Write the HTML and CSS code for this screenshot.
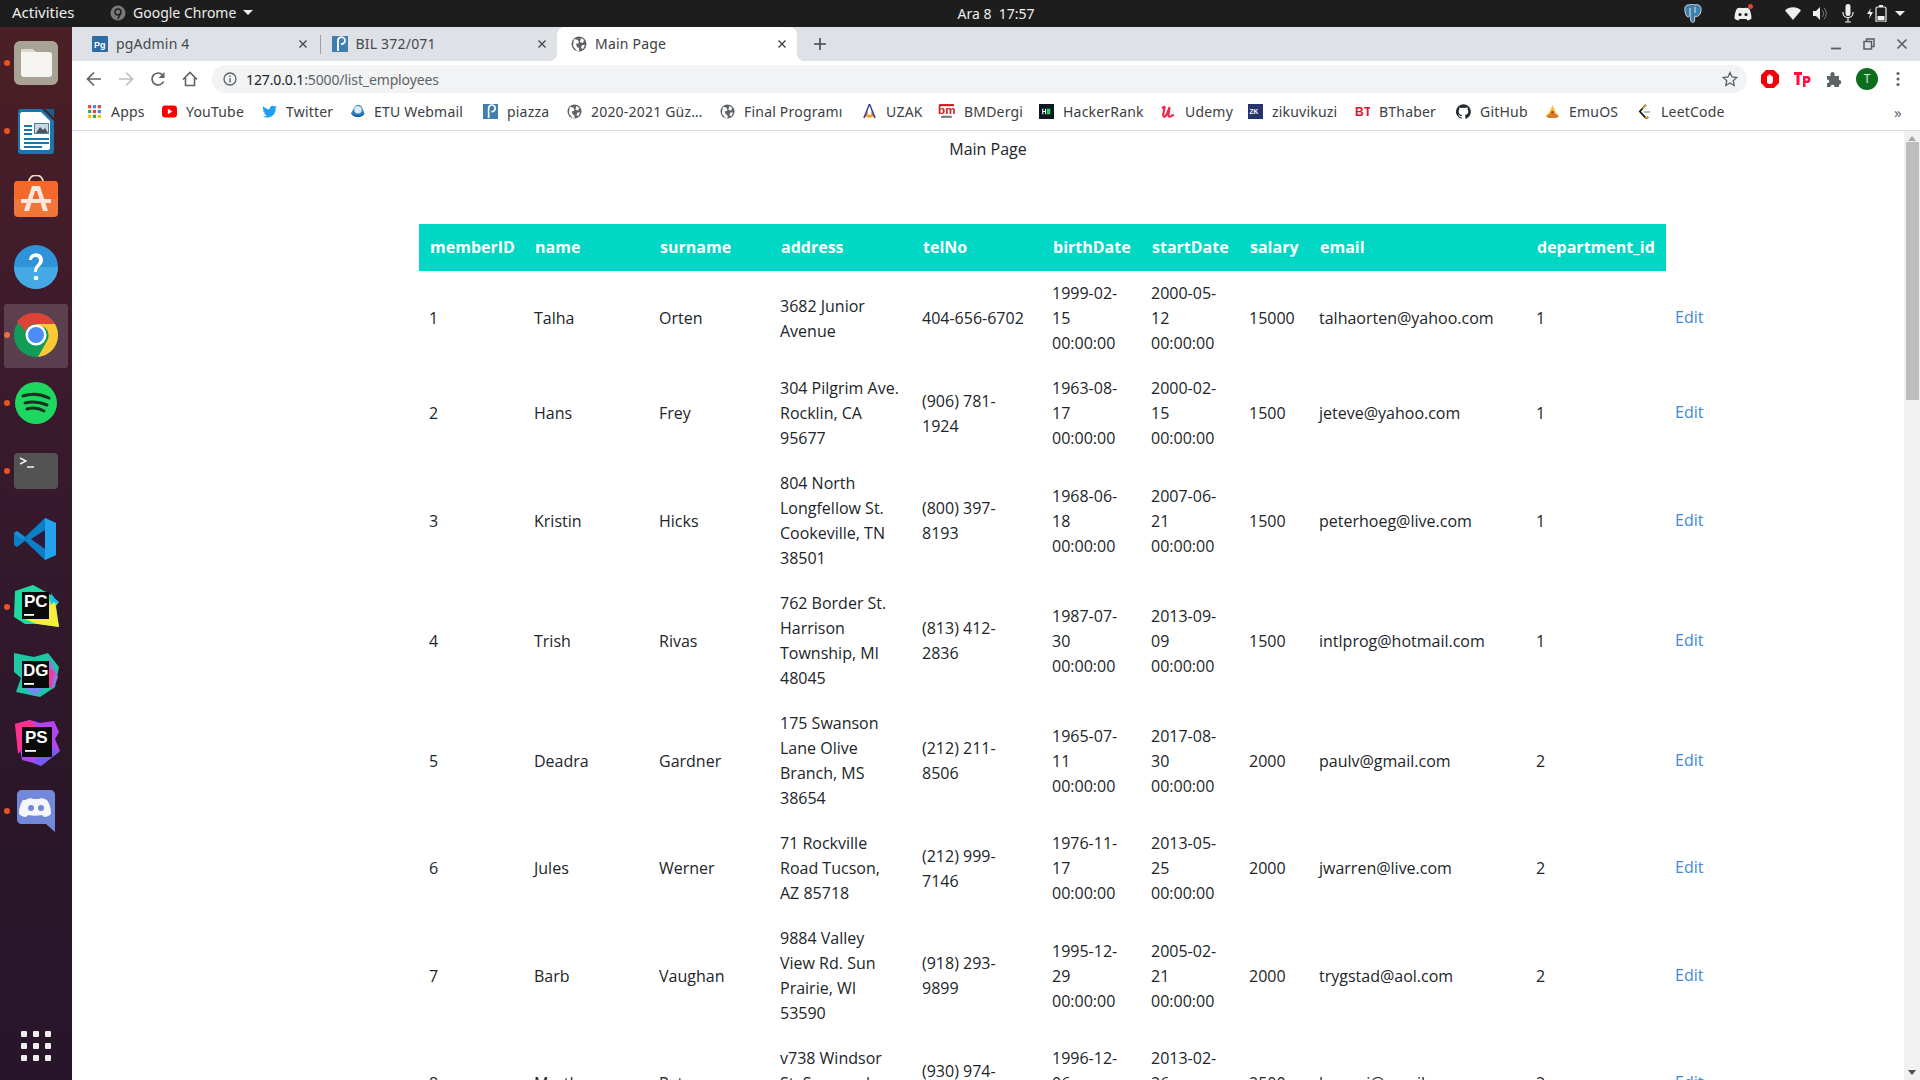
FILE: index.html
```html
<!DOCTYPE html>
<html>
<head>
<meta http-equiv="Content-Type" content="text/html; charset=utf-8"/>
<title>Main Page</title>
<link rel="stylesheet" href="styles.css">
</head>
<body>

<div class="topbar">
  <span class="activities">Activities</span>
  <span class="appmenu">
    <svg width="16" height="16" viewBox="0 0 16 16"><circle cx="8" cy="8" r="7.5" fill="#77797a"/><circle cx="8" cy="7" r="3" fill="none" stroke="#1d1d1d" stroke-width="1.4"/><path d="M10.8 7.5 8 14" stroke="#1d1d1d" stroke-width="1.4"/></svg>
    Google Chrome
    <i class="caret"></i>
  </span>
  <span class="clock">Ara 8&nbsp;&nbsp;17:57</span>
  <span class="tray">
    <svg class="t-pg" width="18" height="20" viewBox="0 0 18 20"><path d="M4 1C1 1 .5 4 1 7c.4 3 1.500 6 3 6 1 0 1.500-1 2-2 0 2 .5 4 1 6 .5 2 3 2 3.500 0 .3-1.500 0-3 .5-5 2 1 4 0 5-2 1.500-3 1.500-6 0-8-1.500-1.500-4-1.500-5-1-1.500-1-5-1-6 0z" fill="#3f7fae" stroke="#c9d5df" stroke-width="1"/><path d="M6 4v7M11 3v6" stroke="#dfe8ef" stroke-width="1"/></svg>
    <span class="t-discord">
      <svg width="18" height="14" viewBox="0 0 18 14"><path d="M3 1.500C5 .5 6.500.5 7 1h4c.5-.5 2-.5 4 .5 1.500 2.500 2.500 6 2.500 10-1 1-2.500 1.800-4 2l-1-1.500H5.500l-1 1.500c-1.500-.2-3-1-4-2 0-4 1-7.500 2.500-10z" fill="#eee"/><circle cx="6" cy="7.500" r="1.600" fill="#1d1d1d"/><circle cx="12" cy="7.500" r="1.600" fill="#1d1d1d"/></svg>
      <i class="t-badge"></i>
    </span>
    <svg class="t-wifi" width="16" height="13" viewBox="0 0 16 13"><path d="M0 3.500C4-.8 12-.8 16 3.500L8 13z" fill="#eee"/></svg>
    <svg class="t-vol" width="15" height="13" viewBox="0 0 15 13"><path d="M0 4h3l4-4v13L3 9H0z" fill="#eee"/><path d="M9 3c2 2 2 5 0 7M11 1c3 3 3 8 0 11" fill="none" stroke="#888" stroke-width="1"/></svg>
    <svg class="t-mic" width="12" height="19" viewBox="0 0 12 19"><rect x="3.500" y="0" width="5" height="12" rx="2.500" fill="#eee"/><path d="M1 8v1c0 6 10 6 10 0V8M6 14v4M3 18h6" fill="none" stroke="#eee" stroke-width="1.200"/></svg>
    <svg class="t-bat" width="20" height="17" viewBox="0 0 20 17"><path d="M4 3 0 9h3l-1 5 4-7H3z" fill="#eee"/><rect x="9" y="2" width="10" height="15" rx="1.500" fill="none" stroke="#eee" stroke-width="1.200"/><rect x="12" y="0" width="4" height="2" fill="#eee"/><rect x="10.500" y="11" width="7" height="4.500" fill="#eee"/></svg>
    <i class="caret big"></i>
  </span>
</div>

<div class="desktop">
  <div class="dock">
    <div class="dock-item running">
      <svg width="44" height="44" viewBox="0 0 44 44"><rect width="44" height="44" rx="6" fill="#a8a394"/><path d="M7 11c0-2 1-3 3-3h8l4 3h13c2 0 3 1 3 3v19c0 2-1 3-3 3H10c-2 0-3-1-3-3z" fill="#f6f5f2"/><path d="M7 11c0-2 1-3 3-3h8l4 3z" fill="#dcd9d2"/></svg>
    </div>
    <div class="dock-item running">
      <svg width="36" height="46" viewBox="0 0 36 46"><path d="M3 1h21l12 12v30c0 2-1 3-3 3H3c-2 0-3-1-3-3V4c0-2 1-3 3-3z" fill="#1c76ad"/><path d="M4 4h19l9 9v27c0 1-1 2-2 2H4c-1 0-2-1-2-2V6c0-1 1-2 2-2z" fill="#fff"/><path d="M27 1h9v9z" fill="#14608f"/><path d="M6 17h8v2H6zm0 4h8v2H6zm0 4h8v2H6zM6 30h25v2H6zm0 4h25v2H6zm0 4h18v2H6z" fill="#1c76ad"/><rect x="16" y="15" width="15" height="11" fill="#3f83b0"/><rect x="17" y="16" width="13" height="9" fill="#c9d6de"/><path d="M18 25l4-6 3 3 2-2 3 5z" fill="#4d5358"/></svg>
    </div>
    <div class="dock-item">
      <svg class="bag" width="44" height="42" viewBox="0 0 44 42"><path d="M15 7c0-9 14-9 14 0" fill="none" stroke="#f3d9b5" stroke-width="1.800"/><rect y="6" width="44" height="36" rx="4" fill="#f27539"/><rect y="6" width="44" height="18" rx="4" fill="#f4682c"/><path d="M18 11h8l8 25h-5l-6-20h-2l-6 20h-5z" fill="#fbe7dc"/><path d="M7 24h30v4H7z" fill="#fbe7dc"/></svg>
    </div>
    <div class="dock-item">
      <svg width="44" height="44" viewBox="0 0 44 44"><circle cx="22" cy="22" r="22" fill="#2e93d9"/><path d="M0 22a22 22 0 0 0 44 0z" fill="#45a9e5"/><path d="M15 15c0-9 14-9 14 0 0 6-6 6-6 12h-3c0-8 5-7 5-12 0-4-7-4-7 0z" fill="#fff"/><circle cx="22" cy="33" r="2.300" fill="#fff"/></svg>
    </div>
    <div class="dock-item running active">
      <svg width="44" height="44" viewBox="0 0 44 44"><circle cx="22" cy="22" r="22" fill="#109d58"/><path d="M22 0a22 22 0 0 1 19 11H22a11 11 0 0 0-10.500 7.500L3 8.500A22 22 0 0 1 22 0z" fill="#db4437"/><path d="M41 11a22 22 0 0 1-17 33l8.500-15A11 11 0 0 0 31 14.500L22 11z" fill="#fcc934"/><circle cx="22" cy="22" r="10.500" fill="#fff"/><circle cx="22" cy="22" r="8" fill="#4d8df5"/></svg>
    </div>
    <div class="dock-item running">
      <svg width="42" height="42" viewBox="0 0 42 42"><circle cx="21" cy="21" r="21" fill="#1ed760"/><path d="M8 14c9-3 18-2 26 2M10 21c8-2 15-1 22 2M12 27c6-2 12-1 17 2" fill="none" stroke="#16331f" stroke-width="3" stroke-linecap="round"/></svg>
    </div>
    <div class="dock-item running">
      <svg width="44" height="36" viewBox="0 0 44 36"><rect width="44" height="36" rx="4" fill="#535353"/><path d="M6 5l6 3-6 3M13 14h7" fill="none" stroke="#f2f2f2" stroke-width="1.400"/></svg>
    </div>
    <div class="dock-item">
      <svg width="44" height="42" viewBox="0 0 44 42"><path d="M31 0l11 5v32l-11 5-20-19L3 29l-3-2V15l3-2 8 6z" fill="#0a7fc7"/><path d="M31 0l11 5v32l-11 5z" fill="#23a2ee"/><path d="M31 12 17 21l14 10z" fill="#32183a"/><path d="M3 13l8 6-3 3-8-7z" fill="#1a8cd8"/></svg>
    </div>
    <div class="dock-item running">
      <svg width="46" height="46" viewBox="0 0 46 46"><path d="M2 7 20 1l15 8 11 9-3 4 3 21-20-3-14 0-11-7z" fill="#20d9a0"/><path d="M32 0l3 16 10 3-8 6z" fill="#b0d65a"/><path d="M38 9l7 10-7 3z" fill="#14c0ee"/><path d="M12 35l30-17 4 25-22-3z" fill="#f5ee3c"/><rect x="9" y="8" width="27" height="27" fill="#0a0a0a"/><text class="ide-mark" x="11" y="23">PC</text><rect x="11" y="30" width="10" height="1.800" fill="#fff"/></svg>
    </div>
    <div class="dock-item">
      <svg width="46" height="46" viewBox="0 0 46 46"><path d="M1 1l20 4 14-4 11 14-4 20-15 10L3 40l5-14L1 20z" fill="#1fc7a4"/><path d="M36 6l9 19-5 12-9-15z" fill="#9475e0"/><path d="M30 12l12 8-4 16-8-2z" fill="#ee3aa3"/><path d="M10 35h22l-10 9z" fill="#6f8cf0"/><rect x="9" y="9" width="27" height="27" fill="#0a0a0a"/><text class="ide-mark" x="10" y="24">DG</text><rect x="11" y="31" width="10" height="1.800" fill="#fff"/></svg>
    </div>
    <div class="dock-item">
      <svg width="48" height="46" viewBox="0 0 48 46"><path d="M3 4 18 0l10 3 14-2 5 11-4 7 5 12-18 14-20-5z" fill="#b345f1"/><path d="M3 4 18 0 26 8 6 34z" fill="#ff318c"/><path d="M28 34l14-6 5 4-18 14-8-3z" fill="#765af8"/><rect x="10" y="7" width="30" height="30" fill="#0a0a0a"/><text class="ide-mark" x="13" y="23">PS</text><rect x="13" y="30" width="11" height="1.800" fill="#fff"/></svg>
    </div>
    <div class="dock-item running">
      <svg width="38" height="42" viewBox="0 0 38 42"><path d="M5 0h28c3 0 5 2 5 5v37l-9-8H5c-3 0-5-2-5-5V5c0-3 2-5 5-5z" fill="#7289da"/><path d="M8 10c4-2 7-2 8-1h6c1-1 4-1 8 1 3 4 4 9 4 14-2 2-4 3-7 3l-2-2c-5 1-9 1-14 0l-2 2c-3 0-5-1-7-3 0-5 1-10 4-14z" fill="#f4f6fb"/><circle cx="14" cy="18" r="3" fill="#7289da"/><circle cx="24" cy="18" r="3" fill="#7289da"/></svg>
    </div>
    <div class="dock-grid">
      <i></i><i></i><i></i><i></i><i></i><i></i><i></i><i></i><i></i>
    </div>
  </div>

  <div class="browser">
    <div class="tabstrip">
      <div class="tab">
        <svg class="ico" viewBox="0 0 16 16"><rect width="16" height="16" rx="1" fill="#2b6ca3"/><text class="fav-mark" x="2" y="11.500">Pg</text></svg>
        <span class="tab-title">pgAdmin 4</span>
        <svg class="tab-x" viewBox="0 0 10 10"><path d="M1.500 1.500l7 7M8.500 1.500l-7 7" stroke="#45494e" stroke-width="1.400"/></svg>
      </div>
      <div class="tab sep">
        <svg class="ico" viewBox="0 0 16 16"><rect width="16" height="16" fill="#3e7eb0"/><path d="M6 15V4.500a3.500 3.500 0 1 1 3 3.500" fill="none" stroke="#fff" stroke-width="1.800"/></svg>
        <span class="tab-title">BIL 372/071</span>
        <svg class="tab-x" viewBox="0 0 10 10"><path d="M1.500 1.500l7 7M8.500 1.500l-7 7" stroke="#45494e" stroke-width="1.400"/></svg>
      </div>
      <div class="tab current">
        <svg class="ico" viewBox="0 0 16 16"><circle cx="8" cy="8" r="7.500" fill="#5f6368"/><path d="M3 3l4 1 1 3-3 1 1 3 2 1 0 3-2 0-4-5zM10 2l3 2-1 3-3-1zM11 9l3 0-2 4-2-1z" fill="#fff"/></svg>
        <span class="tab-title">Main Page</span>
        <svg class="tab-x" viewBox="0 0 10 10"><path d="M1.500 1.500l7 7M8.500 1.500l-7 7" stroke="#3c4043" stroke-width="1.400"/></svg>
      </div>
      <svg class="newtab" width="14" height="14" viewBox="0 0 14 14"><path d="M7 1v12M1 7h12" stroke="#45494e" stroke-width="1.600"/></svg>
      <div class="winctl">
        <svg width="12" height="12" viewBox="0 0 12 12"><path d="M1 10.500h10" stroke="#5a5d60" stroke-width="1.800"/></svg>
        <svg width="12" height="12" viewBox="0 0 12 12"><path d="M3.500 3V1h7.500v7.500H8.500" fill="none" stroke="#5a5d60" stroke-width="1.500"/><rect x="1" y="3.500" width="7.500" height="7.500" fill="none" stroke="#5a5d60" stroke-width="1.500"/></svg>
        <svg width="12" height="12" viewBox="0 0 12 12"><path d="M1.500 1.500l9 9M10.500 1.500l-9 9" stroke="#5a5d60" stroke-width="1.600"/></svg>
      </div>
    </div>

    <div class="toolbar">
      <div class="nav">
        <svg width="16" height="16" viewBox="0 0 16 16"><path d="M15 8H2M8 1.500 1.500 8 8 14.500" fill="none" stroke="#5f6368" stroke-width="1.700"/></svg>
        <svg width="16" height="16" viewBox="0 0 16 16"><path d="M1 8h13M8 1.500 14.500 8 8 14.500" fill="none" stroke="#bcbfc3" stroke-width="1.700"/></svg>
        <svg width="16" height="16" viewBox="0 0 16 16"><path d="M13.500 10.500A6 6 0 1 1 12.500 4" fill="none" stroke="#5f6368" stroke-width="1.700"/><path d="M14.500 1v6h-6z" fill="#5f6368"/></svg>
        <svg width="16" height="16" viewBox="0 0 16 16"><path d="M1 8.500 8 1.500l7 7M3.500 7v7.500h9V7" fill="none" stroke="#5f6368" stroke-width="1.600"/></svg>
      </div>
      <div class="omnibox">
        <svg width="14" height="14" viewBox="0 0 14 14"><circle cx="7" cy="7" r="6" fill="none" stroke="#5f6368" stroke-width="1.300"/><path d="M7 6v4.500M7 3.500v1.500" stroke="#5f6368" stroke-width="1.400"/></svg>
        <span class="url"><b>127.0.0.1</b>:5000/list_employees</span>
        <svg class="star" width="16" height="16" viewBox="0 0 16 16"><path d="M8 1.500l2 4.500 4.800.5-3.600 3.200 1 4.800L8 12l-4.200 2.500 1-4.800L1.200 6.500 6 6z" fill="none" stroke="#5f6368" stroke-width="1.300"/></svg>
      </div>
      <div class="extensions">
        <svg width="18" height="18" viewBox="0 0 18 18"><path d="M5 0h8l5 5v8l-5 5H5l-5-5V5z" fill="#f40009"/><path d="M6 13V6.500c0-1 1.500-1 1.500 0V5c0-1 1.500-1 1.500 0v.5c0-1 1.500-1 1.500 0V7c0-1 1.500-1 1.500 0v4c0 2-1.500 3-3 3s-2-.5-3-1z" fill="#fff"/></svg>
        <svg width="17" height="17" viewBox="0 0 17 17"><path d="M0 1h8v3H5.500v10h-3V4H0zM9 5h4.500c4 0 4 7 0 7H11.500v4H9zm2.500 2.500v2h1.500c1 0 1-2 0-2z" fill="#f7133d"/></svg>
        <svg width="16" height="16" viewBox="0 0 16 16"><path d="M1 5h3.500C4 2 5 1 6.500 1S9 2 8.500 5H13v4c3-.5 3 5 0 4.500V16H8.500c.5-3-4.500-3-4 0H1v-4c3 .5 3-4 0-3.500z" fill="#5f6368"/></svg>
        <span class="avatar">T</span>
        <svg class="menu-dots" width="4" height="16" viewBox="0 0 4 16"><circle cx="2" cy="2.500" r="1.600" fill="#5f6368"/><circle cx="2" cy="8" r="1.600" fill="#5f6368"/><circle cx="2" cy="13.500" r="1.600" fill="#5f6368"/></svg>
      </div>
    </div>

    <div class="bookmarks">
      <span class="bm">
        <svg class="bm-ico" viewBox="0 0 14 14"><path d="M1 1h3v3H1z" fill="#ea4335"/><path d="M5.500 1h3v3h-3z" fill="#4285f4"/><path d="M10 1h3v3h-3z" fill="#ea4335"/><path d="M1 5.500h3v3H1z" fill="#34a853"/><path d="M5.500 5.500h3v3h-3z" fill="#ea4335"/><path d="M10 5.500h3v3h-3z" fill="#4285f4"/><path d="M1 10h3v3H1z" fill="#fbbc05"/><path d="M5.500 10h3v3h-3z" fill="#34a853"/><path d="M10 10h3v3h-3z" fill="#fbbc05"/></svg>
        Apps</span>
      <span class="bm">
        <svg class="bm-ico" viewBox="0 0 14 14"><rect y="1.500" width="14" height="11" rx="3" fill="#f00"/><path d="M5.500 4.500v5L9.700 7z" fill="#fff"/></svg>
        YouTube</span>
      <span class="bm">
        <svg class="bm-ico" viewBox="0 0 14 14"><path d="M14 2.800l-1.500.5c.6-.4 1-1 1.200-1.600l-1.600.8C10.800 1 8 1.600 7.300 3.500c-.2.500-.2 1-.1 1.500C4.800 4.900 2.700 3.700 1.200 2c-.8 1.300-.4 3 .9 3.900L.9 5.500c0 1.400 1 2.500 2.300 2.800l-1.200.1c.4 1.100 1.400 1.900 2.600 2-1.200.9-2.800 1.300-4.300 1.100 5.500 3.200 12.700-.4 12.500-7.700z" fill="#1da1f2"/></svg>
        Twitter</span>
      <span class="bm">
        <svg class="bm-ico" viewBox="0 0 16 16"><path d="M1 10l4-7c2-2.500 6-2.500 7.500 0l3 7c-3 5-11 5-14.500 0z" fill="#2c7ec2"/><ellipse cx="8.500" cy="6" rx="4" ry="4" fill="#dfeaf2"/><path d="M1 10c3 2 9 3 14.500 0-3 5-11 5-14.500 0z" fill="#1a5b93"/></svg>
        ETU Webmail</span>
      <span class="bm">
        <svg class="bm-ico" viewBox="0 0 16 16"><rect width="16" height="16" fill="#3e7eb0"/><path d="M6 15V4.500a3.500 3.500 0 1 1 3 3.500" fill="none" stroke="#fff" stroke-width="1.800"/></svg>
        piazza</span>
      <span class="bm">
        <svg class="bm-ico" viewBox="0 0 16 16"><circle cx="8" cy="8" r="7.500" fill="#5f6368"/><path d="M3 3l4 1 1 3-3 1 1 3 2 1 0 3-2 0-4-5zM10 2l3 2-1 3-3-1zM11 9l3 0-2 4-2-1z" fill="#fff"/></svg>
        2020-2021 Güz…</span>
      <span class="bm">
        <svg class="bm-ico" viewBox="0 0 16 16"><circle cx="8" cy="8" r="7.500" fill="#5f6368"/><path d="M3 3l4 1 1 3-3 1 1 3 2 1 0 3-2 0-4-5zM10 2l3 2-1 3-3-1zM11 9l3 0-2 4-2-1z" fill="#fff"/></svg>
        Final Programı</span>
      <span class="bm">
        <svg class="bm-ico" viewBox="0 0 14 16"><path d="M5 7 1 15l4-3z" fill="#ee5a24"/><path d="M9 7l4 8-4-3z" fill="#ee5a24"/><path d="M3 13c2-2 6-2 8 0l-4 2z" fill="#f7a11a"/><path d="M7 0 1 15M7 0l6 15" fill="none" stroke="#2a3f9a" stroke-width="1.500"/></svg>
        UZAK</span>
      <span class="bm">
        <svg class="bm-ico wide" viewBox="0 0 16 16"><text class="fav-bm" x="0" y="10">bm</text><path d="M1 1h14v2H1z" fill="#d01c24"/><path d="M3 12h10v2H3z" fill="#777"/></svg>
        BMDergi</span>
      <span class="bm">
        <svg class="bm-ico" viewBox="0 0 16 16"><rect width="16" height="16" fill="#0b1a22"/><path d="M4 5v6M7 5v6M4 8h3" stroke="#fff" stroke-width="1.200"/><rect x="8.500" y="5" width="3.500" height="6" fill="#2bd66a"/></svg>
        HackerRank</span>
      <span class="bm">
        <svg class="bm-ico" viewBox="0 0 14 14"><path d="M1 4c2-2 3-2 2 1L2 10c0 3 3 2 4-2l2-5-1 7c0 3 2 2 5 0" fill="none" stroke="#f2274e" stroke-width="2"/></svg>
        Udemy</span>
      <span class="bm">
        <svg class="bm-ico" viewBox="0 0 16 16"><rect width="16" height="16" fill="#27356e"/><text class="fav-mark small" x="1.500" y="11">ZK</text></svg>
        zikuvikuzi</span>
      <span class="bm">
        <svg class="bm-ico" viewBox="0 0 16 16"><text class="fav-bt" x="0" y="13">BT</text></svg>
        BThaber</span>
      <span class="bm">
        <svg class="bm-ico" viewBox="0 0 16 16"><path d="M8 .2a8 8 0 0 0-2.500 15.600c.4.100.5-.2.500-.4v-1.400c-2.200.5-2.700-1-2.700-1-.4-.9-.9-1.200-.9-1.200-.7-.5.100-.5.100-.5.800.1 1.200.8 1.200.8.700 1.200 1.900.9 2.300.7.100-.5.300-.9.500-1.100-1.800-.2-3.600-.9-3.600-4 0-.9.300-1.600.8-2.100-.1-.2-.4-1 .1-2.100 0 0 .7-.2 2.200.8a7.500 7.500 0 0 1 4 0c1.500-1 2.200-.8 2.200-.8.400 1.100.200 1.900.100 2.100.5.600.8 1.300.8 2.100 0 3.100-1.900 3.700-3.700 3.900.3.300.6.800.6 1.500v2.200c0 .2.100.5.600.4A8 8 0 0 0 8 .2z" fill="#24292e"/></svg>
        GitHub</span>
      <span class="bm">
        <svg class="bm-ico" viewBox="0 0 16 16"><path d="M8 1l3 7 4 5-4 2H5l-4-2 4-5z" fill="#f2c12e"/><path d="M1 13l5-3 4 0 5 3-3 2H4z" fill="#d97a2b"/><circle cx="8" cy="9" r="1.500" fill="#b33"/></svg>
        EmuOS</span>
      <span class="bm">
        <svg class="bm-ico" viewBox="0 0 16 16"><path d="M9.500 1 3 8l5.500 6c1.200 1 2.500 1 3.500 0" fill="none" stroke="#111" stroke-width="1.800"/><path d="M9.500 1 6 5" stroke="#e8a33a" stroke-width="1.800"/><path d="M7 8.500h7" stroke="#b3b3b3" stroke-width="1.800"/><path d="M9 14c1.200.6 2.200.4 3-.3" stroke="#f0a400" stroke-width="1.800" fill="none"/></svg>
        LeetCode</span>
      <span class="bm-more">»</span>
    </div>

    <div class="viewport">
      <div class="page">
        <p class="page-title">Main Page</p>
        <div class="table-wrap">
          <table class="employees">
            <colgroup>
              <col class="c-id"><col class="c-name"><col class="c-surname"><col class="c-address"><col class="c-tel">
              <col class="c-birth"><col class="c-start"><col class="c-salary"><col class="c-email"><col class="c-dept"><col class="c-edit">
            </colgroup>
            <thead>
              <tr>
                <th>memberID</th><th>name</th><th>surname</th><th>address</th><th>telNo</th>
                <th>birthDate</th><th>startDate</th><th>salary</th><th>email</th><th>department_id</th><th class="blank"></th>
              </tr>
            </thead>
            <tbody>
              <tr>
                <td>1</td><td>Talha</td><td>Orten</td><td>3682 Junior Avenue</td><td>404-656-6702</td>
                <td>1999-02-15 00:00:00</td><td>2000-05-12 00:00:00</td><td>15000</td><td>talhaorten@yahoo.com</td><td>1</td><td class="edit"><a href="#">Edit</a></td>
              </tr>
              <tr>
                <td>2</td><td>Hans</td><td>Frey</td><td>304 Pilgrim Ave. Rocklin, CA 95677</td><td>(906) 781-1924</td>
                <td>1963-08-17 00:00:00</td><td>2000-02-15 00:00:00</td><td>1500</td><td>jeteve@yahoo.com</td><td>1</td><td class="edit"><a href="#">Edit</a></td>
              </tr>
              <tr>
                <td>3</td><td>Kristin</td><td>Hicks</td><td>804 North Longfellow St. Cookeville, TN 38501</td><td>(800) 397-8193</td>
                <td>1968-06-18 00:00:00</td><td>2007-06-21 00:00:00</td><td>1500</td><td>peterhoeg@live.com</td><td>1</td><td class="edit"><a href="#">Edit</a></td>
              </tr>
              <tr>
                <td>4</td><td>Trish</td><td>Rivas</td><td>762 Border St. Harrison Township, MI 48045</td><td>(813) 412-2836</td>
                <td>1987-07-30 00:00:00</td><td>2013-09-09 00:00:00</td><td>1500</td><td>intlprog@hotmail.com</td><td>1</td><td class="edit"><a href="#">Edit</a></td>
              </tr>
              <tr>
                <td>5</td><td>Deadra</td><td>Gardner</td><td>175 Swanson Lane Olive Branch, MS 38654</td><td>(212) 211-8506</td>
                <td>1965-07-11 00:00:00</td><td>2017-08-30 00:00:00</td><td>2000</td><td>paulv@gmail.com</td><td>2</td><td class="edit"><a href="#">Edit</a></td>
              </tr>
              <tr>
                <td>6</td><td>Jules</td><td>Werner</td><td>71 Rockville Road Tucson, AZ 85718</td><td>(212) 999-7146</td>
                <td>1976-11-17 00:00:00</td><td>2013-05-25 00:00:00</td><td>2000</td><td>jwarren@live.com</td><td>2</td><td class="edit"><a href="#">Edit</a></td>
              </tr>
              <tr>
                <td>7</td><td>Barb</td><td>Vaughan</td><td>9884 Valley View Rd. Sun Prairie, WI 53590</td><td>(918) 293-9899</td>
                <td>1995-12-29 00:00:00</td><td>2005-02-21 00:00:00</td><td>2000</td><td>trygstad@aol.com</td><td>2</td><td class="edit"><a href="#">Edit</a></td>
              </tr>
              <tr>
                <td>8</td><td>Martha</td><td>Peters</td><td>v738 Windsor St. Savannah, GA 31401</td><td>(930) 974-3312</td>
                <td>1996-12-06 00:00:00</td><td>2013-02-26 00:00:00</td><td>2500</td><td>lamoni@gmail.com</td><td>2</td><td class="edit"><a href="#">Edit</a></td>
              </tr>
            </tbody>
          </table>
        </div>
      </div>
      <div class="scrollbar">
        <i class="arrow up"></i>
        <div class="thumb"></div>
        <i class="arrow down"></i>
      </div>
    </div>
  </div>
</div>

</body>
</html>
```

FILE: styles.css
```css
html, body {
  margin: 0;
  height: 100%;
  overflow: hidden;
}

body {
  display: flex;
  flex-direction: column;
  font-family: "Noto Sans", "Open Sans", sans-serif;
  background-color: white;
}

/* gnome top bar */
.topbar {
  height: 27px;
  flex: none;
  box-sizing: border-box;
  padding-left: 72px;
  display: grid;
  grid-template-columns: 1fr auto 1fr;
  align-items: center;
  position: relative;
  background: #1d1d1d;
  color: #eeeeec;
  font-size: 14px;
}

.activities {
  position: absolute;
  left: 12px;
  top: 2px;
  font-size: 15px;
}

.appmenu {
  position: absolute;
  left: 110px;
  top: 3px;
  display: flex;
  align-items: center;
  gap: 7px;
}

.caret {
  width: 0;
  height: 0;
  border-left: 5px solid transparent;
  border-right: 5px solid transparent;
  border-top: 5px solid #eee;
}

.clock {
  grid-column: 2;
}

.tray {
  grid-column: 3;
  justify-self: end;
  display: flex;
  align-items: center;
  height: 27px;
  padding-right: 15px;
}

.t-discord {
  position: relative;
  display: flex;
  margin-left: 32px;
}

.t-badge {
  position: absolute;
  right: -1px;
  top: -3px;
  width: 5px;
  height: 5px;
  border-radius: 50%;
  background: #e8413a;
}

.t-wifi { margin-left: 33px; }
.t-vol { margin-left: 12px; }
.t-mic { margin-left: 14px; }
.t-bat { margin-left: 13px; }
.caret.big { margin-left: 8px; }

/* dock */
.desktop {
  flex: 1;
  min-height: 0;
  display: flex;
}

.dock {
  width: 72px;
  flex: none;
  display: flex;
  flex-direction: column;
  background: linear-gradient(180deg, #4b1f25 0%, #3a1a2d 35%, #2c1729 70%, #27152a 100%);
}

.dock-item {
  height: 68px;
  flex: none;
  display: flex;
  align-items: center;
  justify-content: center;
  position: relative;
}

.dock-item:first-child {
  margin-top: 2px;
}

.dock-item.running::before {
  content: "";
  position: absolute;
  left: 4px;
  top: 31px;
  width: 6px;
  height: 6px;
  border-radius: 50%;
  background: #e95420;
}

.dock-item.active::after {
  content: "";
  position: absolute;
  left: 4px;
  right: 4px;
  top: 3px;
  bottom: 1px;
  border-radius: 3px;
  background: rgba(255, 255, 255, 0.16);
}

.dock-item svg {
  position: relative;
  z-index: 1;
}

.dock-item .bag {
  margin-bottom: 6px;
}

.ide-mark {
  font-family: "Liberation Sans", sans-serif;
  font-weight: bold;
  font-size: 17px;
  fill: #fff;
}

.dock-grid {
  margin-top: auto;
  margin-bottom: 19px;
  align-self: center;
  display: grid;
  grid-template-columns: repeat(3, 6px);
  gap: 6px;
}

.dock-grid i {
  width: 6px;
  height: 6px;
  border-radius: 1px;
  background: #eeeeec;
}

/* chrome */
.browser {
  flex: 1;
  min-width: 0;
  display: flex;
  flex-direction: column;
}

.tabstrip {
  height: 34px;
  flex: none;
  display: flex;
  align-items: center;
  background: #dee1e6;
  padding-left: 6px;
  color: #45494e;
  font-size: 14px;
}

.tab {
  width: 239.5px;
  height: 34px;
  flex: none;
  box-sizing: border-box;
  padding: 0 10px 0 14px;
  display: flex;
  align-items: center;
  gap: 8px;
  position: relative;
}

.tab.sep::before {
  content: "";
  position: absolute;
  left: 2px;
  top: 8px;
  height: 19px;
  width: 1px;
  background: #9aa0a6;
}

.tab.current {
  background: white;
  border-radius: 8px 8px 0 0;
  color: #3c4043;
}

.tab.current::before,
.tab.current::after {
  content: "";
  position: absolute;
  bottom: 0;
  width: 8px;
  height: 8px;
}

.tab.current::before {
  left: -8px;
  background: radial-gradient(circle at 0 0, #dee1e6 8px, white 8.5px);
}

.tab.current::after {
  right: -8px;
  background: radial-gradient(circle at 100% 0, #dee1e6 8px, white 8.5px);
}

.ico {
  width: 16px;
  height: 16px;
  flex: none;
}

.fav-mark {
  font-family: "Liberation Sans", sans-serif;
  font-size: 9px;
  font-weight: bold;
  fill: #fff;
}

.fav-mark.small {
  font-size: 7px;
}

.fav-bm {
  font-family: "Liberation Sans", sans-serif;
  font-size: 11px;
  font-weight: bold;
  fill: #d01c24;
}

.fav-bt {
  font-family: "Liberation Sans", sans-serif;
  font-size: 13px;
  font-weight: bold;
  fill: #e2132a;
}

.tab-title {
  flex: 1;
  white-space: nowrap;
  letter-spacing: 0.2px;
  padding-bottom: 2px;
}

.tab-x {
  width: 10px;
  height: 10px;
  flex: none;
}

.newtab {
  margin-left: 16px;
}

.winctl {
  margin-left: auto;
  display: flex;
  gap: 21px;
  padding-right: 12px;
}

.toolbar {
  height: 32px;
  box-sizing: border-box;
  padding-top: 4px;
  flex: none;
  display: flex;
  align-items: center;
  background: white;
}

.nav {
  width: 140px;
  flex: none;
  box-sizing: border-box;
  padding-left: 14px;
  display: flex;
  gap: 16px;
}

.omnibox {
  width: 1535px;
  height: 28px;
  flex: none;
  box-sizing: border-box;
  padding: 0 9px 0 11px;
  display: flex;
  align-items: center;
  gap: 9px;
  border-radius: 14px;
  background: #f1f3f4;
}

.url {
  flex: 1;
  font-size: 14px;
  letter-spacing: -0.13px;
  color: #5f6368;
}

.url b {
  font-weight: normal;
  color: #202124;
}

.extensions {
  flex: 1;
  display: flex;
  align-items: center;
  gap: 15px;
  padding-left: 14px;
}

.avatar {
  width: 22px;
  height: 22px;
  margin-left: -1px;
  border-radius: 50%;
  background: #0b6e1d;
  color: #d8ead9;
  font-size: 12px;
  line-height: 22px;
  text-align: center;
}

.menu-dots {
  margin-left: 3px;
}

.bookmarks {
  height: 38px;
  flex: none;
  display: grid;
  grid-template-columns: 75px 100px 88px 133px 84px 153px 142px 76px 101px 122px 87px 107px 101px 89px 92px 257px 1fr;
  align-items: center;
  box-sizing: border-box;
  padding-left: 15px;
  background: white;
  border-bottom: 1px solid #d8dadd;
  color: #3c4043;
  font-size: 14px;
  letter-spacing: 0.2px;
}

.bm {
  display: flex;
  align-items: center;
  gap: 9px;
  white-space: nowrap;
}

.bm-ico {
  width: 15px;
  height: 15px;
  flex: none;
}

.bm-ico.wide {
  width: 17px;
  height: 17px;
}

.bm-more {
  color: #5f6368;
  font-size: 15px;
}

/* page */
.viewport {
  flex: 1;
  min-height: 0;
  display: flex;
  background: white;
}

.page {
  flex: 1;
  min-width: 0;
  overflow: hidden;
  font-family: "Open Sans", sans-serif;
  font-size: 16px;
  line-height: 25px;
  color: #212529;
}

.page-title {
  margin: 6px 0 0;
  text-align: center;
}

.table-wrap {
  padding: 62px 0 0 347px;
}

.employees {
  table-layout: fixed;
  width: 1323px;
  border-collapse: collapse;
}

.c-id { width: 105px; }
.c-name { width: 125px; }
.c-surname { width: 121px; }
.c-address { width: 142px; }
.c-tel { width: 130px; }
.c-birth { width: 99px; }
.c-start { width: 98px; }
.c-salary { width: 70px; }
.c-email { width: 217px; }
.c-dept { width: 140px; }
.c-edit { width: 76px; }

.employees th {
  height: 47px;
  padding: 0 11px;
  background: #00d7c4;
  color: white;
  font-weight: bold;
  text-align: left;
  white-space: nowrap;
}

.employees th.blank {
  background: none;
}

.employees td {
  padding: 10px 10px;
  vertical-align: middle;
}

.employees td.edit {
  padding-left: 9px;
}

.edit a {
  color: #3f88d8;
  text-decoration: none;
  position: relative;
  top: -1px;
}

.scrollbar {
  width: 16px;
  flex: none;
  display: flex;
  flex-direction: column;
  align-items: center;
  background: #f1f1f1;
}

.thumb {
  width: 13px;
  height: 258px;
  margin-top: 1px;
  background: #bdbdbd;
}

.arrow {
  width: 0;
  height: 0;
  border-left: 4px solid transparent;
  border-right: 4px solid transparent;
}

.arrow.up {
  margin-top: 5px;
  border-bottom: 5px solid #a6a6a6;
}

.arrow.down {
  margin-top: auto;
  margin-bottom: 5px;
  border-top: 5px solid #505050;
}
```
